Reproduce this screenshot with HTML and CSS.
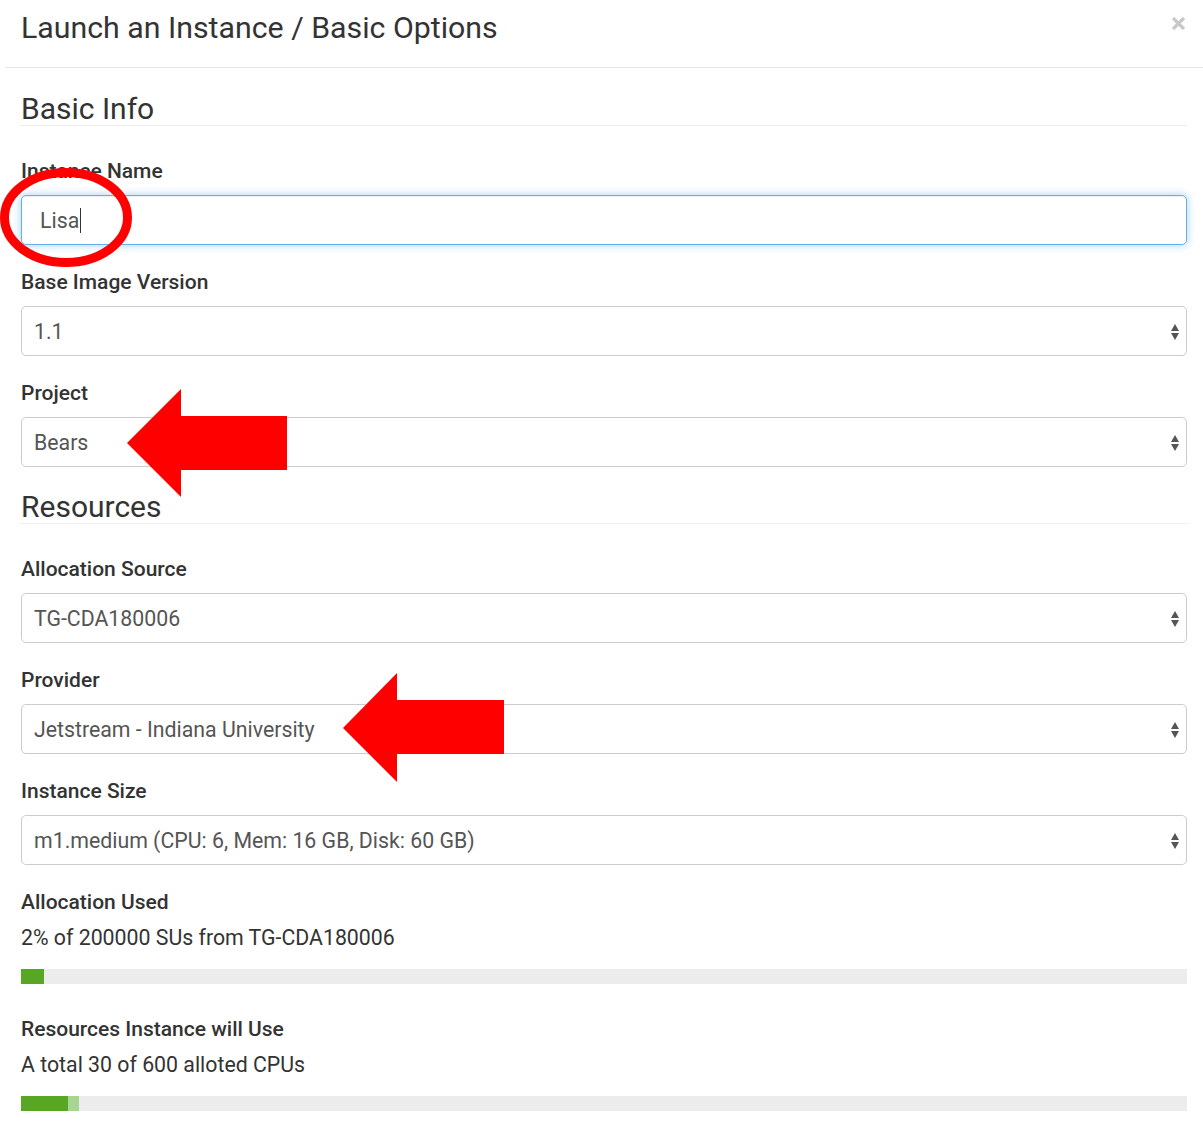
FILE: index.html
```html
<!DOCTYPE html>
<html lang="en">
<head>
<meta charset="utf-8">
<title>Launch an Instance</title>
<link rel="stylesheet" href="styles.css">
</head>
<body>
<div class="modal">
  <div class="modal-header">
    <h1 class="modal-title">Launch an Instance / Basic Options</h1>
    <span class="close" aria-label="Close">
      <svg width="15" height="15" viewBox="0 0 15 15"><path d="M2 2 L13 13 M13 2 L2 13" stroke="#c9c9c9" stroke-width="3.2" stroke-linecap="butt"/></svg>
    </span>
  </div>
  <div class="modal-body">
    <h2 class="section-title first">Basic Info</h2>
    <div class="form-group">
      <label class="label">Instance Name</label>
      <div class="input focused"><span class="value">Lisa</span><span class="caret"></span></div>
    </div>
    <div class="form-group">
      <label class="label">Base Image Version</label>
      <div class="select"><span class="value">1.1</span><svg class="arrows" width="10" height="18" viewBox="0 0 10 18"><path d="M1 8 L5 1 L9 8 Z M1 10 L9 10 L5 17 Z" fill="#555"/></svg></div>
    </div>
    <div class="form-group">
      <label class="label">Project</label>
      <div class="select"><span class="value">Bears</span><svg class="arrows" width="10" height="18" viewBox="0 0 10 18"><path d="M1 8 L5 1 L9 8 Z M1 10 L9 10 L5 17 Z" fill="#555"/></svg></div>
    </div>

    <h2 class="section-title">Resources</h2>
    <div class="form-group">
      <label class="label">Allocation Source</label>
      <div class="select"><span class="value">TG-CDA180006</span><svg class="arrows" width="10" height="18" viewBox="0 0 10 18"><path d="M1 8 L5 1 L9 8 Z M1 10 L9 10 L5 17 Z" fill="#555"/></svg></div>
    </div>
    <div class="form-group">
      <label class="label">Provider</label>
      <div class="select"><span class="value">Jetstream - Indiana University</span><svg class="arrows" width="10" height="18" viewBox="0 0 10 18"><path d="M1 8 L5 1 L9 8 Z M1 10 L9 10 L5 17 Z" fill="#555"/></svg></div>
    </div>
    <div class="form-group">
      <label class="label">Instance Size</label>
      <div class="select"><span class="value">m1.medium (CPU: 6, Mem: 16 GB, Disk: 60 GB)</span><svg class="arrows" width="10" height="18" viewBox="0 0 10 18"><path d="M1 8 L5 1 L9 8 Z M1 10 L9 10 L5 17 Z" fill="#555"/></svg></div>
    </div>

    <div class="stat">
      <div class="label">Allocation Used</div>
      <p class="stat-text">2% of 200000 SUs from TG-CDA180006</p>
      <div class="bar"><div class="fill" style="width:23px"></div></div>
    </div>
    <div class="stat">
      <div class="label">Resources Instance will Use</div>
      <p class="stat-text">A total 30 of 600 alloted CPUs</p>
      <div class="bar"><div class="fill" style="width:47px"></div><div class="fill light" style="width:11px"></div></div>
    </div>
  </div>
</div>

<svg class="annotations" width="1203" height="1125" viewBox="0 0 1203 1125">
  <ellipse cx="66" cy="217.5" rx="61.5" ry="45" fill="none" stroke="#ff0000" stroke-width="9"/>
  <polygon points="127,443 181,389 181,416 287,416 287,470 181,470 181,497" fill="#ff0000"/>
  <polygon points="343,728 397,673 397,700 504,700 504,754 397,754 397,782" fill="#ff0000"/>
</svg>
</body>
</html>
```

FILE: styles.css
```css
html, body {
  margin: 0;
  padding: 0;
  background: #fff;
}

body {
  font-family: Roboto, "Liberation Sans", Arial, sans-serif;
  color: #333;
  width: 1203px;
  height: 1125px;
  position: relative;
  overflow: hidden;
}

.modal-header {
  margin-left: 5px;
  padding: 8px 17px 19px 16px;
  border-bottom: 1px solid #e5e5e5;
  display: flex;
  justify-content: space-between;
  align-items: flex-start;
}

.modal-title {
  margin: 0;
  font-size: 30.3px;
  font-weight: 400;
  line-height: 40px;
  height: 40px;
  color: #333;
}

.close {
  display: block;
  margin-top: 8px;
  width: 15px;
  height: 15px;
}

.close svg {
  display: block;
}

.modal-body {
  padding: 0 16px 0 20px;
}

.section-title {
  margin: 24px 0 0 0;
  font-size: 30px;
  font-weight: 400;
  line-height: 32px;
  color: #333;
  border-bottom: 1px solid #eee;
  padding-left: 1px;
}

.section-title.first {
  margin-top: 25px;
}

.form-group {
  margin-top: 25px;
}

.section-title + .form-group {
  margin-top: 33px;
}

.label {
  display: block;
  font-size: 21px;
  font-weight: 500;
  line-height: 24px;
  color: #333;
  margin-bottom: 12px;
  padding-left: 1px;
}

.input,
.select {
  box-sizing: border-box;
  height: 50px;
  border: 1px solid #ccc;
  border-radius: 5px;
  display: flex;
  align-items: center;
  font-size: 21.3px;
  color: #555;
  margin-left: 1px;
  background: #fff;
}

.input {
  padding-left: 18px;
}

.input.focused {
  border-color: #66afe9;
  box-shadow: inset 0 1px 1px rgba(0, 0, 0, 0.075), 0 0 8px rgba(102, 175, 233, 0.6);
}

.caret {
  display: inline-block;
  width: 1px;
  height: 25px;
  background: #333;
  margin-left: 1px;
}

.select {
  padding: 0 6px 0 12px;
  justify-content: space-between;
}

.arrows {
  display: block;
  margin-top: 1px;
}

.stat {
  margin-top: 25px;
}

.stat + .stat {
  margin-top: 33px;
}

.stat-text {
  margin: 0 0 19px 0;
  font-size: 21.3px;
  line-height: 24px;
  color: #333;
  padding-left: 1px;
}

.bar {
  height: 15px;
  background: #ececec;
  display: flex;
  margin-left: 1px;
}

.fill {
  height: 100%;
  background: #57a624;
}

.fill.light {
  background: #a8d591;
}

.annotations {
  position: absolute;
  left: 0;
  top: 0;
  pointer-events: none;
}
```
